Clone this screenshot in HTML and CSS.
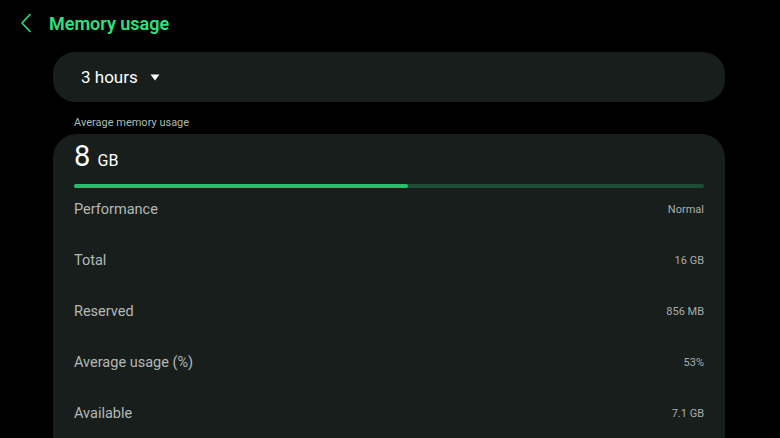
FILE: index.html
```html
<!DOCTYPE html>
<html>

<head>
    <meta charset="UTF-8">
    <meta name="viewport" content="width=device-width">
    <title>Memory usage</title>
    <link rel="stylesheet" href="styles.css">
</head>

<body>
    <header class="topbar">
        <svg class="back" width="12" height="20" viewBox="0 0 12 20">
            <path d="M10 1.5 L2 10 L10 18.5" fill="none" stroke="#2ee07f" stroke-width="1.6" stroke-linecap="round" stroke-linejoin="round" />
        </svg>
        <h1>Memory usage</h1>
    </header>

    <main class="content">
        <div class="picker">
            <span>3 hours</span>
            <svg width="10" height="7" viewBox="0 0 10 7">
                <path d="M0.5 0.5 H9.5 L5 6.5 Z" fill="#fff" />
            </svg>
        </div>

        <p class="caption">Average memory usage</p>

        <section class="card">
            <div class="big">8 <small>GB</small></div>
            <div class="bar">
                <div class="fill" style="width: 53%"></div>
            </div>
            <div class="rows">
                <div class="row"><span>Performance</span><span class="val">Normal</span></div>
                <div class="row"><span>Total</span><span class="val">16 GB</span></div>
                <div class="row"><span>Reserved</span><span class="val">856 MB</span></div>
                <div class="row"><span>Average usage (%)</span><span class="val">53%</span></div>
                <div class="row"><span>Available</span><span class="val">7.1 GB</span></div>
            </div>
        </section>
    </main>
</body>

</html>
```

FILE: styles.css
```css
* {
    box-sizing: border-box;
}

body {
    margin: 0;
    background: #000;
    font-family: Roboto, "Noto Sans", sans-serif;
    color: #fff;
    height: 438px;
    overflow: hidden;
}

/* En-tete */
.topbar {
    display: flex;
    align-items: center;
    height: 46px;
    padding: 0 0 0 20px;
}

.back {
    display: block;
}

.topbar h1 {
    margin: 0 0 0 17px;
    font-size: 18px;
    font-weight: 600;
    color: #2ee07f;
}

.content {
    padding: 6px 55px 0 53px;
}

/* Choix de la periode */
.picker {
    display: flex;
    align-items: center;
    gap: 12px;
    height: 50px;
    padding: 0 28px;
    background: #171e1c;
    border-radius: 22px;
    font-size: 17px;
}

.caption {
    margin: 14px 0 5px 21px;
    font-size: 11px;
    color: #a8bdb3;
}

/* Carte principale */
.card {
    background: #171e1c;
    border-radius: 24px 24px 0 0;
    padding: 4px 21px 0 21px;
    height: 320px;
}

.big {
    font-size: 29px;
    line-height: 36px;
}

.big small {
    font-size: 16px;
}

.bar {
    margin-top: 5px;
    height: 4px;
    border-radius: 2px;
    background: #1e4d35;
}

.fill {
    height: 100%;
    border-radius: 2px;
    background: #27c06a;
}

.rows {
    margin-top: -4px;
}

.row {
    display: flex;
    justify-content: space-between;
    align-items: center;
    height: 51px;
    font-size: 14.5px;
    color: #b4b8b6;
}

.val {
    font-size: 11px;
    color: #a9adab;
}
```
